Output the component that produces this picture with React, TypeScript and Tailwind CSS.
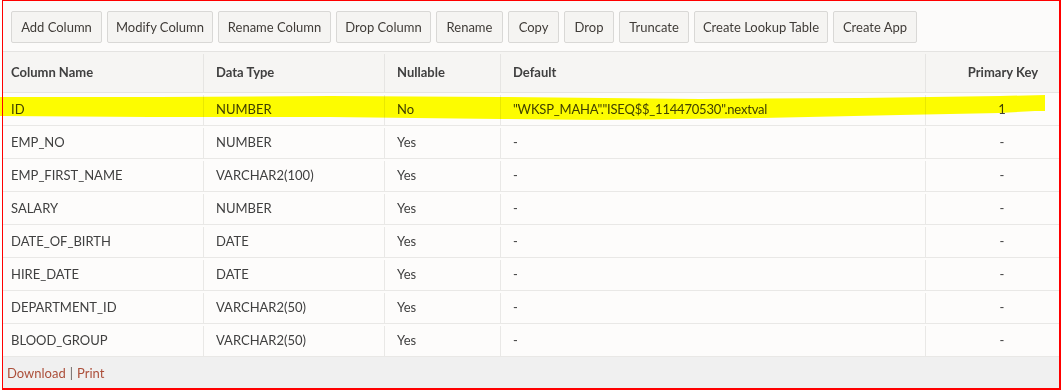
import React from 'react';

const buttons: { label: string; w: string }[] = [
  { label: 'Add Column', w: 'w-[91px]' },
  { label: 'Modify Column', w: 'w-[106px]' },
  { label: 'Rename Column', w: 'w-[113px]' },
  { label: 'Drop Column', w: 'w-[95px]' },
  { label: 'Rename', w: 'w-[67px]' },
  { label: 'Copy', w: 'w-[51px]' },
  { label: 'Drop', w: 'w-[50px]' },
  { label: 'Truncate', w: 'w-[70px]' },
  { label: 'Create Lookup Table', w: 'w-[134px]' },
  { label: 'Create App', w: 'w-[84px]' },
];

type Row = { name: string; type: string; nullable: string; def: string; pk: string };

const rows: Row[] = [
  { name: 'ID', type: 'NUMBER', nullable: 'No', def: '"WKSP_MAHA"."ISEQ$$_114470530".nextval', pk: '1' },
  { name: 'EMP_NO', type: 'NUMBER', nullable: 'Yes', def: '-', pk: '-' },
  { name: 'EMP_FIRST_NAME', type: 'VARCHAR2(100)', nullable: 'Yes', def: '-', pk: '-' },
  { name: 'SALARY', type: 'NUMBER', nullable: 'Yes', def: '-', pk: '-' },
  { name: 'DATE_OF_BIRTH', type: 'DATE', nullable: 'Yes', def: '-', pk: '-' },
  { name: 'HIRE_DATE', type: 'DATE', nullable: 'Yes', def: '-', pk: '-' },
  { name: 'DEPARTMENT_ID', type: 'VARCHAR2(50)', nullable: 'Yes', def: '-', pk: '-' },
  { name: 'BLOOD_GROUP', type: 'VARCHAR2(50)', nullable: 'Yes', def: '-', pk: '-' },
];

const grid = 'grid grid-cols-[200px_181px_116px_425px_1fr]';

const App: React.FC = () => {
  return (
    <div
      className="relative w-[1061px] h-[391px] bg-white text-[13px] text-[#404040]"
      style={{ fontFamily: 'Lato, "Open Sans", sans-serif' }}
    >
      <div className="ml-[2px] w-[1059px] h-[390px] border-t border-l border-r-2 border-b-2 border-[#ff0000] flex flex-col">
        {/* toolbar */}
        <div className="flex gap-[5px] pl-[8px] pt-[10px] pb-[8px] bg-[#fcfbfa] border-b border-[#e4e3e1]">
          {buttons.map((b) => (
            <button
              key={b.label}
              type="button"
              className={`${b.w} h-[32px] pt-[2px] shrink-0 rounded-[2px] border border-[#d9d8d6] bg-[#f5f4f2] text-[#403c38] whitespace-nowrap text-center text-[13px]`}
            >
              {b.label}
            </button>
          ))}
        </div>

        {/* header */}
        <div className={`${grid} h-[41px] pt-[2px] bg-[#f6f5f3] border-b border-[#e6e5e3] font-bold`}>
          <div className="pl-[8px] flex items-center">Column Name</div>
          <div className="pl-[12px] flex items-center border-l border-[#e6e5e3]">Data Type</div>
          <div className="pl-[12px] flex items-center border-l border-[#e6e5e3]">Nullable</div>
          <div className="pl-[12px] flex items-center border-l border-[#e6e5e3]">Default</div>
          <div className="pr-[21px] flex items-center justify-end border-l border-[#e6e5e3]">Primary Key</div>
        </div>

        {/* rows */}
        <div className="bg-[#fdfcfb]">
          {rows.map((r) => (
            <div key={r.name} className={`${grid} h-[33px] pt-[2px] border-b border-[#e9e8e6]`}>
              <div className="pl-[8px] flex items-center whitespace-nowrap">{r.name}</div>
              <div className="pl-[12px] flex items-center border-l border-[#e9e8e6]">{r.type}</div>
              <div className="pl-[12px] flex items-center border-l border-[#e9e8e6]">{r.nullable}</div>
              <div className="pl-[12px] flex items-center border-l border-[#e9e8e6] whitespace-nowrap tracking-[-0.2px]">{r.def}</div>
              <div className="pl-[40px] pr-[21px] flex items-center justify-center border-l border-[#e9e8e6]">{r.pk}</div>
            </div>
          ))}
        </div>

        {/* footer */}
        <div className="flex-1 bg-[#f0f0f0] pl-[4px] pt-[2px] flex items-center">
          <a href="#" className="text-[#ac4f3a]">Download</a>
          <span className="mx-[4px] text-[#6b6461]">|</span>
          <a href="#" className="text-[#ac4f3a]">Print</a>
        </div>
      </div>

      {/* highlighter stroke over the first row */}
      <svg
        className="absolute inset-0 pointer-events-none mix-blend-multiply"
        width="1061"
        height="391"
        viewBox="0 0 1061 391"
      >
        <path
          d="M0 97 L160 97 L330 96 L500 97 L700 99 L860 98 L1000 96 L1045 95 L1045 111 L1035 111 L1000 113 L900 115 L760 118 L600 120 L500 119 L330 117 L150 117 L0 116 Z"
          fill="#ffff00"
        />
      </svg>
    </div>
  );
};

export default App;
